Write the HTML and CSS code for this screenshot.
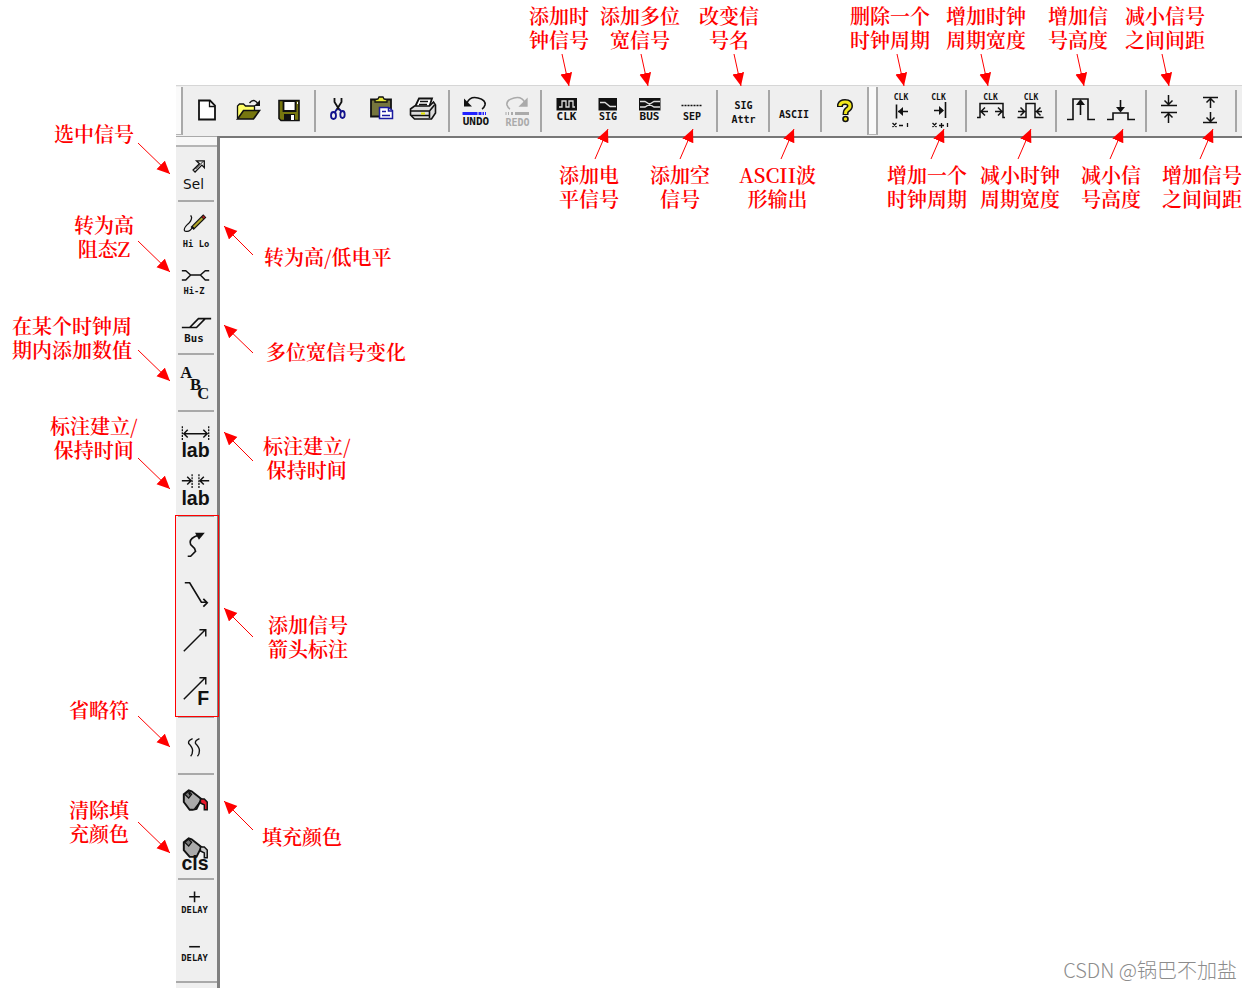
FILE: index.html
```html
<!DOCTYPE html>
<html lang="zh-CN">
<head>
<meta charset="utf-8">
<title>TimeGen 工具栏说明</title>
<link rel="stylesheet" href="styles.css">
</head>
<body>
<main class="stage">
<div class="app">
<header class="topbar" role="toolbar" aria-label="工具栏">
<span class="grip"></span>
<button class="tool" aria-label="新建"><svg viewBox="185 88 42 46"><path class="w" d="M199 100.500h11l5 5v14h-16z"/><path d="M209.500 100.500v6h5.500"/></svg></button>
<button class="tool" aria-label="打开"><svg viewBox="227 88 42 46"><path fill="#ffff66" d="M237.500 118v-12l2-2h4l2 2h9v4"/><path class="olive" d="M237.500 119l6-8.500h16l-6 8.500z"/><path d="M249.500 103q4-5 8 0"/><path class="k" d="M260 100v6h-6z"/></svg></button>
<button class="tool" aria-label="保存"><svg viewBox="269 88 42 46"><path class="olive" d="M279 100.500h20v20h-18l-2-2z"/><path class="w" d="M283.500 101h12v10h-12z"/><path class="k" d="M284 114h11v7h-11z"/><path fill="#fff" stroke="none" d="M291 115h3v5h-3zM297 102h1v2h-1z"/></svg></button>
<span class="vsep"></span>
<button class="tool" aria-label="剪切"><svg viewBox="319 88 42 46"><path d="M334.500 98v4l5 8M341.500 98v4l-5 8" stroke-width="1.800"/><g stroke="#11118c" stroke-width="1.800"><path d="M337 109l-2 3M339 109l2 2"/><ellipse cx="333.500" cy="115.500" rx="2.500" ry="3.500"/><ellipse cx="342.500" cy="114.500" rx="2.200" ry="3.500"/></g></svg></button>
<button class="tool" aria-label="粘贴"><svg viewBox="361 88 42 46"><path fill="#76763d" stroke-width="1.800" d="M371 99.500h20v17h-20z"/><path fill="#e8e838" d="M375 102v-2l3-1 1-2h4l1 2 3 1v2z"/><g stroke="#1b1ba0" stroke-width="1.500"><path fill="#fff" d="M379.500 107.500h9l4 3v8h-13z"/><path d="M388.500 107.500v3.500h4M382 111.500h4M382 115.500h8"/></g></svg></button>
<button class="tool" aria-label="打印"><svg viewBox="403 88 42 46"><path class="w" d="M415 107l4-8.500h13l-3 9"/><path d="M420 101.500h8M419 104.500h8"/><path fill="#ddd" stroke-width="1.600" d="M410.500 109l4-3h15l4-4 2 3v8l-4 6h-17l-4-4z"/><path d="M410.500 111h19l5-6M411 115.500h18M429.500 111v7" stroke-width="1.600"/><path stroke="#e6e600" stroke-width="2" d="M421 113.500h4"/></svg></button>
<span class="vsep"></span>
<button class="tool" aria-label="撤销"><svg viewBox="453 88 42 46"><path stroke-width="1.600" d="M467 103q3-7 11-5 8 2 7 7-1 3-3 4"/><path class="k" d="M464 98.500v8h8z"/><path stroke="#2222ff" stroke-width="3" d="M462.500 113.500h15M478.500 113.500h3M482.500 113.500h1.500M485 113.500h1"/><text x="476" y="125" class="s11">UNDO</text></svg></button>
<button class="tool" aria-label="重做" disabled><svg viewBox="495 88 42 46"><g stroke="#aaa"><path stroke-width="1.600" d="M525 103q-3-7-11-5-8 2-7 7 1 3 3 4"/><path fill="#aaa" d="M527 99v7h-7z"/><path stroke-width="3" d="M515 113.500h14M511 113.500h2M508 113.500h1M505.500 113.500h1"/></g><text x="517.500" y="126" class="s10 dim">REDO</text></svg></button>
<span class="vsep"></span>
<button class="tool" aria-label="CLK"><svg viewBox="545 88 42 46"><path class="k" d="M556.500 98h20.500v12.500h-20.500z"/><path class="l" d="M559 107h3v-6h4v6h3v-6h4v6h2"/><text x="566.500" y="120" class="s11">CLK</text></svg></button>
<button class="tool" aria-label="SIG"><svg viewBox="587 88 42 46"><path class="k" d="M598.500 98h18.500v12.500h-18.500z"/><path class="l" d="M600 102.500h5l5 4h6"/><text x="608" y="120" class="s10">SIG</text></svg></button>
<button class="tool" aria-label="BUS"><svg viewBox="629 88 42 46"><path class="k" d="M639 98h21.500v12.500h-21.500z"/><path class="l" d="M640 101.500h5l9 5.500h6M640 107h5l9-5.500h6"/><text x="649.500" y="120" class="s11">BUS</text></svg></button>
<button class="tool" aria-label="SEP"><svg viewBox="671 88 42 46"><path d="M681.500 105.500h21" stroke-dasharray="2 1"/><text x="692" y="120" class="s10">SEP</text></svg></button>
<span class="vsep"></span>
<button class="tool wide" aria-label="SIG Attr"><svg viewBox="721 88 44 46"><text x="743.500" y="109" class="s10">SIG</text><text x="743.500" y="123" class="s10">Attr</text></svg></button>
<span class="vsep"></span>
<button class="tool wide" aria-label="ASCII"><svg viewBox="773 88 44 46"><text x="794" y="118" class="s10">ASCII</text></svg></button>
<span class="vsep"></span>
<button class="tool" aria-label="帮助"><svg viewBox="825 88 42 46"><path stroke-width="6" d="M840 107v-2q1-3 5-3 5 0 5 4 0 2-3 4-1.500 1-1.500 5"/><path stroke="#f2e61c" stroke-width="3" d="M840 106v-1q1-3 5-3 5 0 5 4 0 2-3 4-1.500 1-1.500 4"/><circle cx="845.500" cy="119" r="2.500" fill="#f2e61c" stroke-width="1.600"/></svg></button>
<span class="grip mid"></span>
<button class="tool slim" aria-label="CLK x-1"><svg viewBox="880 88 41 46"><text x="901" y="99.500" class="s8">CLK</text><path d="M896.500 104.500v14M898 111.500h10" stroke-width="1.600"/><path class="k" d="M898 111.500l5-4.500v9z"/><path d="M892.500 123l4 4M896.500 123l-4 4M899 125.500h4M907.500 123v4"/></svg></button>
<button class="tool slim" aria-label="CLK x+1"><svg viewBox="921 88 41 46"><text x="938.500" y="99.500" class="s8">CLK</text><path d="M945.500 102v16M934 110.500h9" stroke-width="1.600"/><path class="k" d="M944 110.500l-5-4.500v9z"/><path d="M932.500 123l4 4M936.500 123l-4 4M939 125.500h5M941.500 123v5M947.500 123v4"/></svg></button>
<span class="vsep"></span>
<button class="tool slim" aria-label="CLK 加宽"><svg viewBox="970 88 41 46"><text x="990.500" y="99.500" class="s8">CLK</text><path d="M977 117.500h3v-14h23v14h2M981 111.500h7M985 107.500l-4 4 4 4M995 111.500h7M998 107.500l4 4-4 4" stroke-width="1.500"/></svg></button>
<button class="tool slim" aria-label="CLK 减宽"><svg viewBox="1011 88 41 46"><text x="1031" y="99.500" class="s8">CLK</text><path d="M1017.500 117.500h8.500v-14h9v14h8.500M1018 111.500h6M1020.500 107.500l4 4-4 4M1042 111.500h-6M1040.500 107.500l-4 4 4 4" stroke-width="1.500"/></svg></button>
<span class="vsep"></span>
<button class="tool slim" aria-label="增加高度"><svg viewBox="1060 88 41 46"><path d="M1067 119.500h6v-20.500h15v20.500h7M1080.500 101v14" stroke-width="1.600"/><path class="k" d="M1080.500 99l-4.500 6h9z"/></svg></button>
<button class="tool slim" aria-label="减小高度"><svg viewBox="1101 88 41 46"><path d="M1107 119.500h6v-6.500h15v6.500h7M1120.500 100v11" stroke-width="1.600"/><path class="k" d="M1120.500 112.500l-4.500-5.500h9z"/></svg></button>
<span class="vsep"></span>
<button class="tool slim" aria-label="减小间距"><svg viewBox="1150 88 41 46"><path d="M1161 105.500h16M1161 112.500h16M1168.500 95v9M1164.500 100.500l4 4 4-4M1168.500 123v-9M1164.500 117.500l4-4 4 4" stroke-width="1.500"/></svg></button>
<button class="tool slim" aria-label="增加间距"><svg viewBox="1191 88 41 46"><path d="M1203 97.500h15M1203 122.500h14M1210.500 98v10M1206.500 102.500l4-4 4 4M1210.500 112v9M1206.500 117.500l4 4 4-4" stroke-width="1.500"/></svg></button>
<span class="vsep"></span>
</header>
<div class="work">
<nav class="sidebar" role="toolbar" aria-label="绘图工具">
<span class="side-grip"></span>
<button class="side tall" aria-label="Sel"><svg viewBox="175 147 42 50"><path d="M192.500 170l6.500-6.500-3-3h8v7l-2.500-2.500-7 7z"/><path d="M195 169l8-8" stroke-width="1"/><text x="193" y="189" class="sel">Sel</text></svg></button>
<span class="hsep"></span>
<button class="side" aria-label="Hi Lo"><svg viewBox="175 206 42 48"><path d="M190 215l1 2q0 4-4 7-5 5-3 7 5 2 8-4"/><path stroke-width="4.500" d="M191.500 228.500l13-13"/><path stroke="#b0a52b" stroke-width="2.200" d="M193 227l9-9"/><path stroke="#a22" stroke-width="2.500" d="M202.500 217.500l1.500-1.500"/><text x="195.500" y="247" class="s9">Hi Lo</text></svg></button>
<button class="side" aria-label="Hi-Z"><svg viewBox="175 254 42 48"><path stroke-width="1.500" d="M181 270.500h4l5 4.500-5 5h-4M190 275h11M209 270.500h-4l-5 4.500 5 5h4"/><text x="193.500" y="294" class="s9">Hi-Z</text></svg></button>
<button class="side" aria-label="Bus"><svg viewBox="175 302 42 48"><path stroke-width="1.700" d="M181 327.500h15l9-9h-7l-9 9M198 318.500h13"/><text x="193.500" y="342" class="s11">Bus</text></svg></button>
<span class="hsep"></span>
<button class="side" aria-label="ABC"><svg viewBox="175 359 42 48"><text x="185.500" y="378" class="abc">A</text><text x="195" y="390" class="abc">B</text><text x="203" y="399" class="abc">C</text></svg></button>
<span class="hsep"></span>
<button class="side" aria-label="lab 外侧"><svg viewBox="175 416 42 48"><path stroke-dasharray="2 1" d="M181.500 426v14M208.500 426v14"/><path stroke-width="1.500" d="M183 433.500h24M187 429.500l-4 4 4 4M203 429.500l4 4-4 4"/><text x="195" y="457" class="lab">lab</text></svg></button>
<button class="side" aria-label="lab 内侧"><svg viewBox="175 464 42 48"><path stroke-dasharray="2 1" d="M191.500 474v14M198.500 474v14"/><path stroke-width="1.500" d="M181 480.500h9M186.500 476.500l4 4-4 4M209 480.500h-9M203.500 476.500l-4 4 4 4"/><text x="195" y="505" class="lab">lab</text></svg></button>
<span class="hsep"></span>
<button class="side" aria-label="曲线箭头"><svg viewBox="175 521 42 48"><path stroke-width="1.700" d="M187 556.500h3l5-5-1-3-4-4q-2-5 4-8l5-2"/><path class="k" d="M194.500 532.500h10l-6 7z"/></svg></button>
<button class="side" aria-label="折线箭头"><svg viewBox="175 569 42 48"><path stroke-width="1.700" d="M184 582.500h5l12 20h5M203 599l4 4-4 4"/></svg></button>
<button class="side" aria-label="直线箭头"><svg viewBox="175 617 42 48"><path stroke-width="1.500" d="M183 651.500l22-22M199 629.500h6.500v7"/></svg></button>
<button class="side" aria-label="箭头 F"><svg viewBox="175 665 42 48"><path stroke-width="1.500" d="M183 699.500l22-22M199 677.500h6.500v7"/><text x="203" y="705" class="lab">F</text></svg></button>
<span class="hsep"></span>
<button class="side" aria-label="省略符"><svg viewBox="175 722 42 48"><path stroke-width="1.400" d="M192 738.500q-5 2-4 5 4 4 4 7 0 4-2 6M199 738.500q-5 2-4 5 4 4 4 7 0 4-2 6"/></svg></button>
<span class="hsep"></span>
<button class="side" aria-label="填充颜色"><svg viewBox="175 779 42 48"><path fill="#aaa" stroke-width="2" d="M183 794l5-4 3 1 10 8-5 10-4 1h-3l-6-8z"/><path fill="#777" d="M184 794l4-3 3 3-3 4z"/><path d="M187.500 793h1.500v2M194 809l7-9"/><path fill="#e8192c" stroke-width="1.500" d="M200 799h4l3 3v8h-3v-5l-4-2z"/></svg></button>
<button class="side" aria-label="cls"><svg viewBox="175 827 42 48"><path fill="#aaa" stroke-width="2" d="M183 842l5-4 3 1 10 8-5 10h-7l-6-7z"/><path fill="#777" d="M184 842l4-3 3 3-3 4z"/><path fill="#ccc" stroke-width="1.500" d="M200 847h4l3 3v8h-3v-5l-4-2z"/><text x="194.500" y="870" class="lab">cls</text></svg></button>
<span class="hsep"></span>
<button class="side" aria-label="+ DELAY"><svg viewBox="175 884 42 48"><path stroke-width="1.600" d="M188.500 896.500h11M194 891v11"/><text x="194" y="913" class="s9">DELAY</text></svg></button>
<button class="side" aria-label="- DELAY"><svg viewBox="175 932 42 48"><path stroke-width="1.600" d="M188.500 946.500h11"/><text x="194" y="961" class="s9">DELAY</text></svg></button>
<span class="side-end"></span>
</nav>
<section class="canvas" aria-label="画布"></section>
</div>
</div>

<div class="group-frame"></div>
<svg class="arrows" viewBox="0 0 1252 989" width="1252" height="989" aria-hidden="true">
<defs><marker id="head" markerUnits="userSpaceOnUse" markerWidth="14" markerHeight="14" refX="13" refY="6" orient="auto"><path d="M0 0L13 6L0 12z"/></marker></defs>
<g>
<path d="M562 54L569 86"/><path d="M641 54L648 86"/><path d="M734 54L741 86"/><path d="M897 54L904 86"/><path d="M981 54L988 86"/><path d="M1077 54L1084 86"/><path d="M1162 54L1169 86"/>
<path d="M595 159L608 129"/><path d="M680 159L693 129"/><path d="M781 159L794 129"/><path d="M931 159L944 129"/><path d="M1018 159L1031 129"/><path d="M1110 159L1123 129"/><path d="M1200 159L1213 129"/>
<path d="M138 143L170 174"/><path d="M138 241L170 272"/><path d="M138 350L170 381"/><path d="M138 458L170 489"/><path d="M138 716L170 747"/><path d="M138 822L170 853"/>
<path d="M253 255L224 226"/><path d="M253 353L224 325"/><path d="M253 461L224 432"/><path d="M253 637L224 608"/><path d="M253 830L224 801"/>
</g>
</svg>
<p class="note add-clk">添加时<br>钟信号</p>
<p class="note add-bus">添加多位<br>宽信号</p>
<p class="note rename">改变信<br>号名</p>
<p class="note del-cycle">删除一个<br>时钟周期</p>
<p class="note widen">增加时钟<br>周期宽度</p>
<p class="note higher">增加信<br>号高度</p>
<p class="note closer">减小信号<br>之间间距</p>
<p class="note add-sig">添加电<br>平信号</p>
<p class="note add-sep">添加空<br>信号</p>
<p class="note ascii">ASCII波<br>形输出</p>
<p class="note add-cycle">增加一个<br>时钟周期</p>
<p class="note narrow">减小时钟<br>周期宽度</p>
<p class="note lower">减小信<br>号高度</p>
<p class="note apart">增加信号<br>之间间距</p>
<p class="note select">选中信号</p>
<p class="note hi-z">转为高<br>阻态Z</p>
<p class="note value">在某个时钟周<br>期内添加数值</p>
<p class="note hold-in">标注建立/<br>保持时间</p>
<p class="note skip">省略符</p>
<p class="note clear">清除填<br>充颜色</p>
<p class="note level">转为高/低电平</p>
<p class="note bus-edge">多位宽信号变化</p>
<p class="note hold-out">标注建立/<br>保持时间</p>
<p class="note arrow-note">添加信号<br>箭头标注</p>
<p class="note fill">填充颜色</p>
<p class="watermark">CSDN @锅巴不加盐</p>
</main>
</body>
</html>
```
FILE: styles.css
```css
* { box-sizing: border-box; }
body { margin: 0; background: #fff; }
p { margin: 0; }

.stage {
  position: relative;
  display: flex;
  min-height: 100vh;
  padding: 85px 10px 1px 176px;
  overflow: hidden;
}
.app { flex: 1; display: flex; flex-direction: column; min-width: 0; }

.topbar {
  display: flex;
  align-items: center;
  height: 51px;
  background: #efefef;
  border-top: 1px solid #d6d6d6;
}
.grip {
  flex: none;
  width: 7px;
  height: 48px;
  margin-right: 2px;
  background: #fafafa;
  border-right: 2px solid #a9a9a9;
  border-bottom: 1px solid #b5b5b5;
}
.grip.mid { width: 11px; border-left: 2px solid #a9a9a9; }
.vsep {
  flex: none;
  width: 8px;
  height: 42px;
  background: linear-gradient(90deg, transparent 3px, #a6a6a6 3px, #a6a6a6 5px, transparent 5px);
}
.tool, .side {
  flex: none;
  padding: 0;
  border: 0;
  background: transparent;
}
.tool { width: 42px; height: 46px; }
.tool.wide { width: 44px; }
.tool.slim { width: 41px; }
.tool svg, .side svg {
  display: block;
  width: 100%;
  height: 100%;
  fill: none;
  stroke: #111;
  stroke-width: 1.3px;
}

svg .w { fill: #fff; stroke-width: 1.8px; }
svg .k { fill: #111; stroke: none; }
svg .l { stroke: #ddd; }
svg .olive { fill: #77770f; stroke-width: 1.6px; }

svg text {
  fill: #111;
  stroke: none;
  text-anchor: middle;
  font-family: "DejaVu Sans Mono", monospace;
  font-weight: bold;
}
.s8 { font-size: 8px; }
.s9 { font-size: 9px; }
.s10 { font-size: 10px; }
.s11 { font-size: 11px; }
svg .dim { fill: #aaa; }
svg .sel { font: 14px "DejaVu Sans", sans-serif; }
svg .abc { font: bold 17px "Liberation Serif", serif; }
svg .lab { font: bold 20px "Liberation Sans", sans-serif; }

.work { flex: 1; display: flex; }
.sidebar {
  display: flex;
  flex-direction: column;
  width: 41px;
  background: #efefef;
  border-top: 1px solid #a9a9a9;
}
.side-grip {
  height: 10px;
  background: #f7f7f7;
  border-bottom: 2px solid #b5b5b5;
}
.side { height: 48px; }
.side.tall { height: 50px; }
.hsep {
  height: 9px;
  margin: 0 3px 0 2px;
  background: linear-gradient(transparent 3px, #a9a9a9 3px, #a9a9a9 5px, transparent 5px);
}
.side-end { border-top: 2px solid #a9a9a9; margin-top: 1px; }
.canvas {
  flex: 1;
  background: #fff;
  border-top: 2px solid #777;
  border-left: 3px solid #808080;
}

.group-frame {
  position: absolute;
  left: 175px;
  top: 515px;
  width: 44px;
  height: 202px;
  border: 1px solid #f00;
}
.arrows {
  position: absolute;
  left: 0;
  top: 0;
  pointer-events: none;
}
.arrows path { stroke: #f00; fill: none; marker-end: url(#head); }
.arrows marker path { stroke: none; fill: #f00; marker-end: none; }

.note {
  position: absolute;
  color: #f00;
  font: 600 20px/24px "Noto Serif CJK SC", "Noto Sans CJK SC", serif;
  text-align: center;
  white-space: nowrap;
}
.add-clk { left: 529px; top: 4px; }
.add-bus { left: 600px; top: 4px; }
.rename { left: 699px; top: 4px; }
.del-cycle { left: 850px; top: 4px; }
.widen { left: 946px; top: 4px; }
.higher { left: 1048px; top: 4px; }
.closer { left: 1125px; top: 4px; }
.add-sig { left: 559px; top: 163px; }
.add-sep { left: 650px; top: 163px; }
.ascii { left: 739px; top: 163px; }
.add-cycle { left: 887px; top: 163px; }
.narrow { left: 980px; top: 163px; }
.lower { left: 1081px; top: 163px; }
.apart { left: 1162px; top: 163px; }
.select { left: 54px; top: 122px; }
.hi-z { left: 74px; top: 213px; }
.value { left: 12px; top: 314px; }
.hold-in { left: 50px; top: 414px; }
.skip { left: 69px; top: 698px; }
.clear { left: 69px; top: 798px; }
.level { left: 264px; top: 245px; }
.bus-edge { left: 266px; top: 340px; }
.hold-out { left: 263px; top: 434px; }
.arrow-note { left: 268px; top: 613px; }
.fill { left: 262px; top: 825px; }

.watermark {
  position: absolute;
  right: 15px;
  bottom: 7px;
  color: #8c8c8c;
  font: 300 20px/24px "Noto Sans CJK SC", sans-serif;
}
```
